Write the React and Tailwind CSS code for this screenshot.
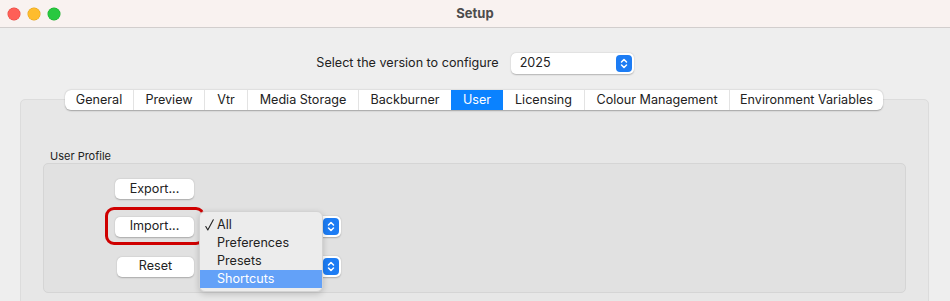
import { useState } from "react"

const TABS = [
    { name: "General", w: "w-[68px]" },
    { name: "Preview", w: "w-[71px]" },
    { name: "Vtr", w: "w-[43px]" },
    { name: "Media Storage", w: "w-[111px]" },
    { name: "Backburner", w: "w-[93px]" },
    { name: "User", w: "w-[52px]" },
    { name: "Licensing", w: "w-[81px]" },
    { name: "Colour Management", w: "w-[145px]" },
    { name: "Environment Variables", w: "w-[154px]" },
]

const Stepper = () => (
    <span className="flex h-[17px] w-[16px] items-center justify-center rounded-[4px] bg-[#1c7cf4]">
        <svg width="8" height="11" viewBox="0 0 8 11" fill="none" stroke="white" strokeWidth="1.5" strokeLinecap="round" strokeLinejoin="round">
            <path d="M1.5 4 L4 1.5 L6.5 4" />
            <path d="M1.5 7 L4 9.5 L6.5 7" />
        </svg>
    </span>
)

const PushButton = ({ children, className = "" }) => (
    <button className={`h-[20px] rounded-[5px] bg-white text-[12.6px] text-[#222] shadow-[0_0.5px_1.5px_rgba(0,0,0,0.25)] ${className}`}>
        {children}
    </button>
)

export default function App() {
    const [tab, setTab] = useState("User")

    return (
        <div className="relative h-[301px] w-[950px] overflow-hidden bg-[#eeeeee] font-['Inter','Liberation_Sans',sans-serif] text-[12.6px] text-[#222]">
            {/* title bar */}
            <div className="relative flex h-[28px] items-center border-b border-[#d2cecd] bg-[#f9f2f0]">
                <div className="ml-[8px] flex gap-[8px]">
                    <span className="h-[12px] w-[12px] rounded-full bg-[#fe5f57] ring-[0.5px] ring-[#e2463f]" />
                    <span className="h-[12px] w-[12px] rounded-full bg-[#febc2e] ring-[0.5px] ring-[#e1a116]" />
                    <span className="h-[12px] w-[12px] rounded-full bg-[#28c840] ring-[0.5px] ring-[#1aab29]" />
                </div>
                <div className="absolute inset-x-0 text-center text-[13px] font-bold text-[#4c4c4c]">Setup</div>
            </div>

            {/* version row */}
            <div className="mt-[25px] flex h-[21px] items-center justify-center gap-[12px]">
                <span>Select the version to configure</span>
                <div className="flex h-[21px] w-[123px] items-center justify-between rounded-[5px] bg-white pl-[9px] pr-[2px] shadow-[0_0.5px_1.5px_rgba(0,0,0,0.25)]">
                    <span>2025</span>
                    <Stepper />
                </div>
            </div>

            {/* tabs */}
            <div className="relative z-10 mt-[16px] flex justify-center pr-[2px]">
                <div className="flex h-[20px] rounded-[6px] bg-white shadow-[0_0.5px_1.5px_rgba(0,0,0,0.3)]">
                    {TABS.map((t, i) => (
                        <button
                            key={t.name}
                            onClick={() => setTab(t.name)}
                            className={`${t.w} h-[20px] text-center text-[12.6px] ${
                                tab === t.name ? "bg-[#0a82ff] text-white" : "text-[#222]"
                            } ${i === 0 ? "rounded-l-[6px]" : ""} ${i === TABS.length - 1 ? "rounded-r-[6px]" : ""} ${
                                i > 0 && tab !== t.name && TABS[i - 1].name !== tab ? "border-l border-[#e3e3e3]" : ""
                            }`}
                        >
                            {t.name}
                        </button>
                    ))}
                </div>
            </div>

            {/* panel */}
            <div className="mx-[20px] -mt-[11px] h-[230px] w-[909px] rounded-[5px] border border-[#dcdcdc] bg-[#e7e7e7] px-[22px] pt-[49px]">
                <div className="pl-[7px] text-[11px] leading-[14px] text-[#222]">User Profile</div>
                <div className="h-[130px] rounded-[5px] border border-[#d5d5d5] bg-[#e1e1e1] pl-[71px] pt-[15px]">
                    <PushButton className="w-[79px]">Export...</PushButton>
                    <div className="mt-[17px] flex items-center">
                        <PushButton className="w-[79px]">Import...</PushButton>
                        <div className="ml-[18px] flex h-[21px] w-[129px] items-center justify-end rounded-[5px] bg-white pr-[2px] shadow-[0_0.5px_1.5px_rgba(0,0,0,0.25)]">
                            <Stepper />
                        </div>
                    </div>
                    <div className="mt-[19px] flex items-center">
                        <PushButton className="ml-[2px] w-[77px]">Reset</PushButton>
                        <div className="ml-[18px] flex h-[21px] w-[129px] items-center justify-end rounded-[5px] bg-white pr-[2px] shadow-[0_0.5px_1.5px_rgba(0,0,0,0.25)]">
                            <Stepper />
                        </div>
                    </div>
                </div>
            </div>

            {/* highlight around Import */}
            <div className="absolute left-[105px] top-[207px] h-[38px] w-[100px] rounded-[9px] border-[3px] border-[#cf0000]" />

            {/* open popup menu */}
            <div className="absolute left-[199px] top-[211px] w-[124px] rounded-[6px] border border-[#d3d3d3] bg-[#ececec] pb-[3px] pt-[4px] shadow-[0_2px_6px_rgba(0,0,0,0.18)]">
                {["All", "Preferences", "Presets", "Shortcuts"].map((item) => (
                    <div
                        key={item}
                        className={`relative h-[18px] pl-[17px] leading-[18px] ${item === "Shortcuts" ? "bg-[#63a1f8] text-white" : "text-[#222]"}`}
                    >
                        {item === "All" && (
                            <svg className="absolute left-[5px] top-[3px]" width="9" height="12" viewBox="0 0 9 12" fill="none" stroke="#222" strokeWidth="1.1" strokeLinecap="round" strokeLinejoin="round">
                                <path d="M0.8 7.5 L2.8 11 L8.3 0.8" />
                            </svg>
                        )}
                        {item}
                    </div>
                ))}
            </div>
        </div>
    )
}
